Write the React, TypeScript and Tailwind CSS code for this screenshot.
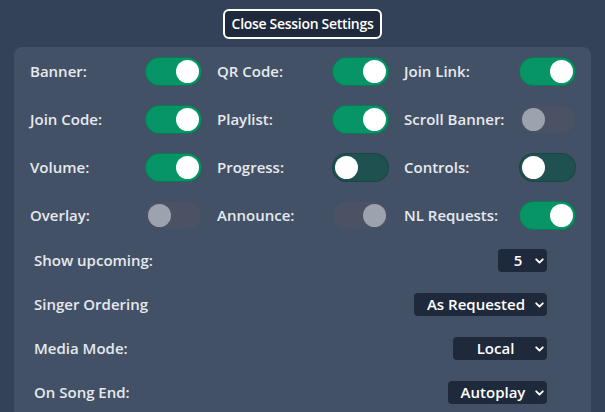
import type { ReactNode } from "react";

type ToggleState = "on" | "off" | "disabled-off" | "disabled-on";

interface ToggleItem {
  label: string;
  state: ToggleState;
}

const TOGGLES: ToggleItem[] = [
  { label: "Banner:", state: "on" },
  { label: "QR Code:", state: "on" },
  { label: "Join Link:", state: "on" },
  { label: "Join Code:", state: "on" },
  { label: "Playlist:", state: "on" },
  { label: "Scroll Banner:", state: "disabled-off" },
  { label: "Volume:", state: "on" },
  { label: "Progress:", state: "off" },
  { label: "Controls:", state: "off" },
  { label: "Overlay:", state: "disabled-off" },
  { label: "Announce:", state: "disabled-on" },
  { label: "NL Requests:", state: "on" },
];

const SELECTS = [
  { label: "Show upcoming:", value: "5", width: "w-[49px]" },
  { label: "Singer Ordering", value: "As Requested", width: "w-[133px]" },
  { label: "Media Mode:", value: "Local", width: "w-[94px]" },
  { label: "On Song End:", value: "Autoplay", width: "w-[99px]" },
];

function Toggle({ state }: { state: ToggleState }) {
  const track =
    state === "on"
      ? "bg-[#079466] ring-1 ring-[#0a7a55]"
      : state === "off"
        ? "bg-[#1e5150] ring-1 ring-[#1a4645]"
        : "bg-[#4a5264]";
  const knob = state.startsWith("disabled") ? "bg-[#9ca3af]" : "bg-white";
  const right = state === "on" || state === "disabled-on";

  return (
    <div
      className={`flex items-center w-[55px] h-[27px] rounded-full p-[2px] shrink-0 ${track} ${
        right ? "justify-end" : "justify-start"
      }`}
    >
      <span className={`w-[23px] h-[23px] rounded-full ${knob}`} />
    </div>
  );
}

function Select({ width, children }: { width: string; children: ReactNode }) {
  return (
    <div
      className={`flex items-center h-[23px] rounded-[4px] bg-[#1e293b] text-white text-[15px] font-semibold ${width}`}
    >
      <span className="flex-1 text-center pl-[3px] leading-none">{children}</span>
      <svg
        width="9"
        height="6"
        viewBox="0 0 9 6"
        className="mr-[3px] shrink-0"
        fill="none"
        stroke="white"
        strokeWidth="1.8"
        strokeLinecap="round"
        strokeLinejoin="round"
      >
        <path d="M1.2 1.3 L4.5 4.5 L7.8 1.3" />
      </svg>
    </div>
  );
}

export default function App() {
  return (
    <div
      className="min-h-screen bg-[#334256] text-[#e5e9ef] pt-[9px] px-[14px]"
      style={{ fontFamily: '"Open Sans", "Noto Sans", sans-serif' }}
    >
      <div className="flex justify-center">
        <button className="h-[30px] px-[7px] rounded-[6px] border-2 border-white bg-[#1e293b] text-white text-[14px] font-semibold leading-none tracking-[-0.3px]">
          Close Session Settings
        </button>
      </div>

      <div className="mt-[8px] bg-[#435166] rounded-t-[8px] pt-[11px] px-4 pb-6">
        <div className="grid grid-cols-3 gap-x-4 gap-y-[21px]">
          {TOGGLES.map((t) => (
            <div key={t.label} className="flex items-center justify-between">
              <span className="text-[15px] font-semibold">{t.label}</span>
              <Toggle state={t.state} />
            </div>
          ))}
        </div>

        <div className="mt-[20px] pl-1 pr-7 flex flex-col gap-[21px]">
          {SELECTS.map((s) => (
            <div key={s.label} className="flex items-center justify-between">
              <span className="text-[15px] font-semibold">{s.label}</span>
              <Select width={s.width}>{s.value}</Select>
            </div>
          ))}
        </div>
      </div>
    </div>
  );
}
